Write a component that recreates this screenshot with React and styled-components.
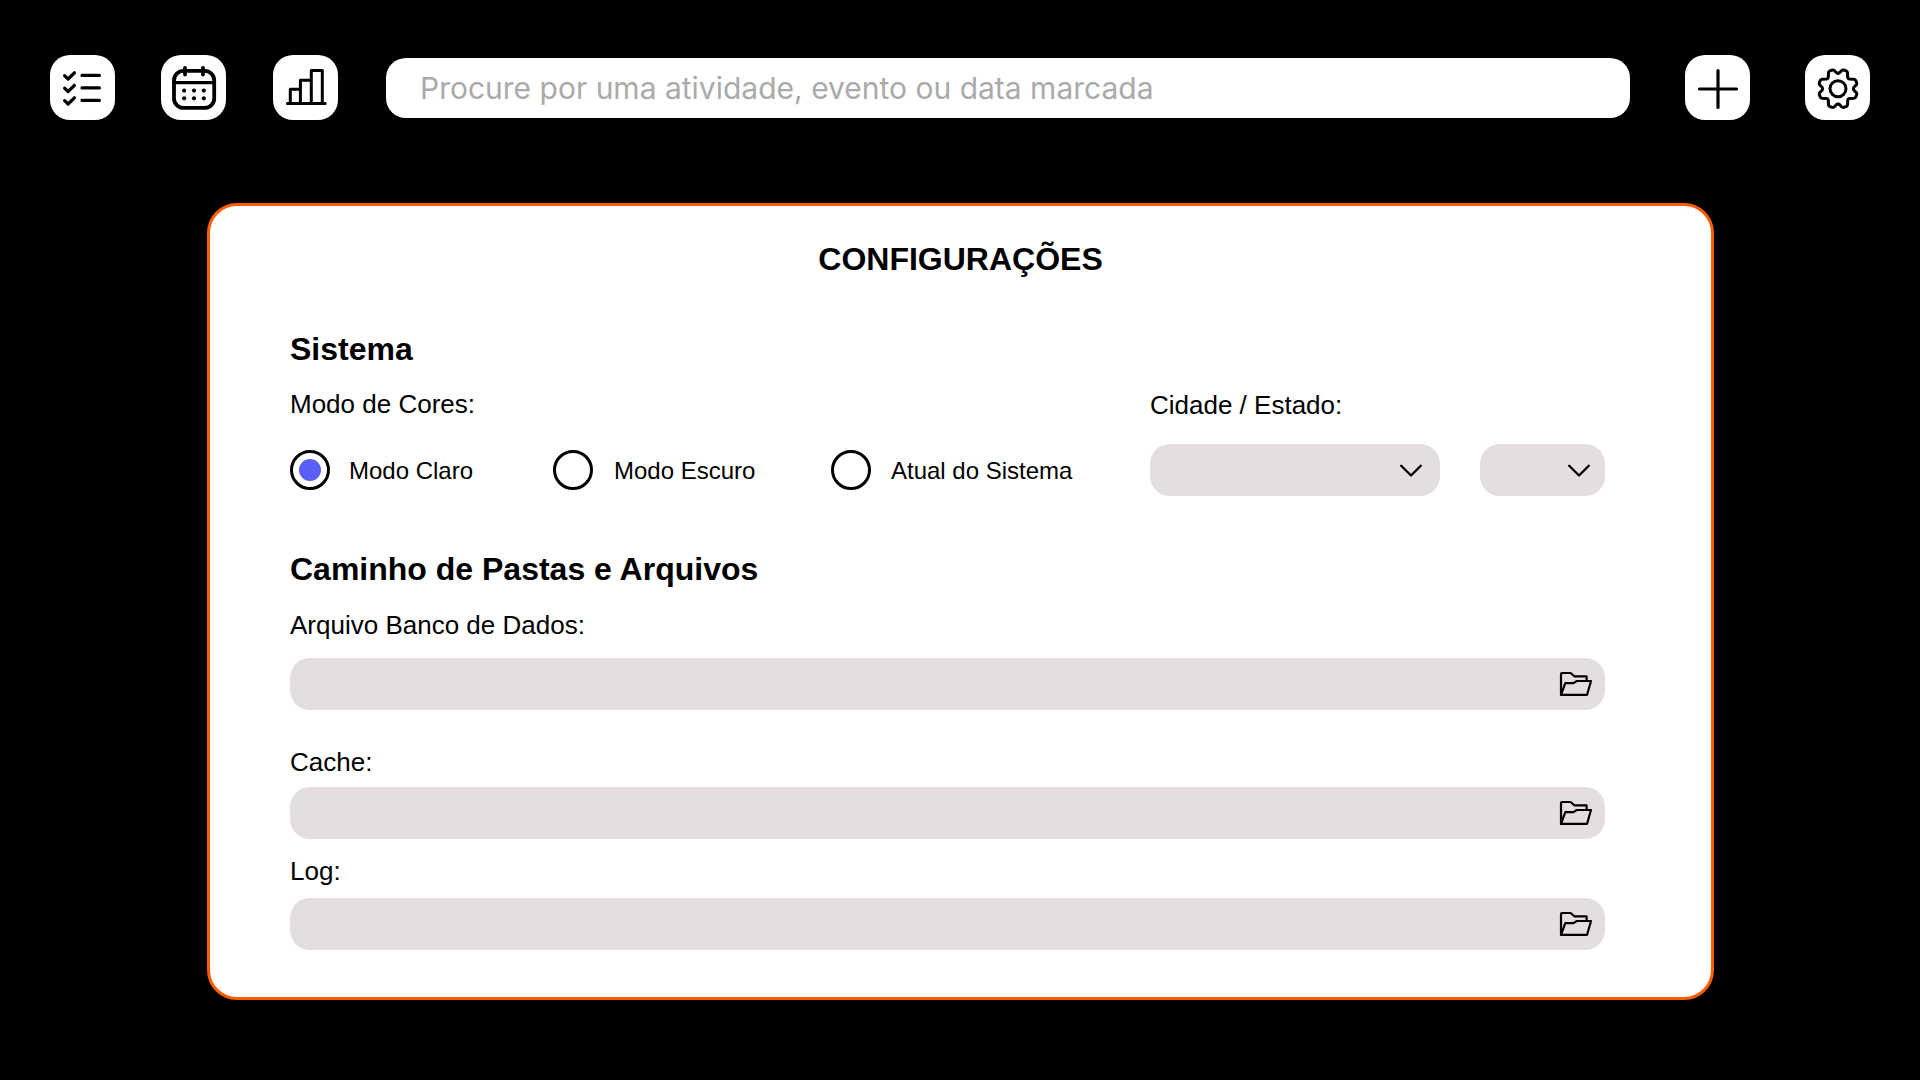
import React, { useState } from "react";
import styled, { createGlobalStyle } from "styled-components";

const GlobalStyle = createGlobalStyle`
  * { box-sizing: border-box; }
  body {
    margin: 0;
    background: #000;
    color: #000;
    font-family: "Liberation Sans", Arial, sans-serif;
  }
`;

const Page = styled.div`
  width: 1920px;
  height: 1080px;
  display: flex;
  flex-direction: column;
  background: #000;
  overflow: hidden;
`;

const Toolbar = styled.header`
  display: flex;
  align-items: center;
  padding: 55px 50px 0;
`;

const NavGroup = styled.nav`
  display: flex;
  gap: 46px;
`;

const ActionGroup = styled.div`
  display: flex;
  gap: 55px;
`;

const IconButton = styled.button`
  width: 65px;
  height: 65px;
  padding: 0;
  border: 0;
  border-radius: 20px;
  background: #fff;
  color: #000;
  display: block;
  margin-left: ${(p) => p.$shift || 0}px;

  svg { display: block; }
`;

const SearchInput = styled.input`
  flex: 1;
  height: 60px;
  margin: 1px 55px 0 48px;
  padding: 0 34px;
  border: 0;
  border-radius: 20px;
  background: #fff;
  outline: 0;
  font: 400 30px Inter, sans-serif;

  &::placeholder {
    color: #aaa;
    opacity: 1;
  }
`;

const Card = styled.main`
  width: 1507px;
  height: 797px;
  margin: 83px 0 0 207px;
  padding: 35px 106px 0 80px;
  border: 3px solid #ff5c00;
  border-radius: 30px;
  background: #fff;
`;

const Title = styled.h1`
  margin: 0 -26px 54px 0;
  text-align: center;
  font-size: 32px;
  line-height: 36px;
`;

const SectionTitle = styled.h2`
  margin: 0;
  font-size: 32px;
  line-height: 36px;
`;

const SystemRow = styled.section`
  display: flex;
  justify-content: space-between;
  margin: 22px 0 55px;
`;

const Label = styled.div`
  font-size: 26px;
  line-height: 30px;
`;

const RadioGroup = styled.div`
  display: grid;
  grid-template-columns: 263px 278px auto;
  margin-top: 31px;
`;

const RadioOption = styled.label`
  display: flex;
  align-items: center;
  gap: ${(p) => p.$gap}px;
  height: 40px;
  font-size: 24px;
  line-height: 27px;
  white-space: nowrap;
`;

const RadioInput = styled.input`
  appearance: none;
  display: grid;
  place-items: center;
  flex: none;
  width: 40px;
  height: 40px;
  margin: 0;
  border: 3px solid #000;
  border-radius: 50%;

  &:checked::before {
    content: "";
    width: 22px;
    height: 22px;
    border-radius: 50%;
    background: #5b5ff7;
  }
`;

const Place = styled.div`
  width: 455px;
  padding-top: 1px;
`;

const SelectRow = styled.div`
  display: flex;
  gap: 40px;
  margin-top: 24px;
`;

const SelectBox = styled.button`
  display: flex;
  align-items: center;
  justify-content: flex-end;
  width: ${(p) => p.$width}px;
  height: 52px;
  padding: 0 ${(p) => p.$end}px 0 0;
  border: 0;
  border-radius: 20px;
  background: #e4dede;
`;

const PathField = styled.div`
  display: flex;
  flex-direction: column;
  gap: ${(p) => p.$gap}px;
  margin-top: ${(p) => p.$top}px;
`;

const PathBox = styled.div`
  display: flex;
  align-items: center;
  justify-content: flex-end;
  height: 52px;
  padding-right: 13px;
  border-radius: 20px;
  background: #e4dede;
`;

const Glyph = ({ children, width = 3.2 }) => (
  <svg width="65" height="65" viewBox="0 0 65 65" fill="none" stroke="currentColor"
    strokeWidth={width} strokeLinecap="round" strokeLinejoin="round">
    {children}
  </svg>
);

const ChecklistIcon = () => (
  <Glyph>
    {[20.4, 32.9, 45.4].map((y) => (
      <path key={y} d={`M14.6 ${y + 0.2}l3.5 3.4 6.3-6.2M32 ${y}h17.4`} />
    ))}
  </Glyph>
);

const CalendarIcon = () => (
  <Glyph width={3.8}>
    <rect x="13" y="15.9" width="40.2" height="37" rx="9.5" />
    <path d="M13 27.6h40.2" strokeWidth="3.4" />
    <path d="M24 13v6.6M42 13v6.6" />
    {[35.6, 43.3].map((y) =>
      [23.1, 33, 42.8].map((x) => (
        <circle key={`${x}-${y}`} cx={x} cy={y} r="2.1" fill="currentColor" stroke="none" />
      ))
    )}
  </Glyph>
);

const ChartIcon = () => (
  <Glyph width={3}>
    <path d="M14.4 48.6h37.8M17.3 48.6V34.3h10M27.4 48.6V25.2h10.8M38.3 48.6V15.4h11v33.2" />
  </Glyph>
);

const PlusIcon = () => (
  <Glyph>
    <path d="M14.5 34h37M33 15.5v37" />
  </Glyph>
);

const GearIcon = () => (
  <Glyph width={3}>
    <g transform="translate(33 33.7)">
      <circle r="8" />
      {[0, 90, 180, 270].map((a) => (
        <path key={a} transform={`rotate(${a})`}
          d="M0-15.4Q1.4-15.4 2.6-17L3.6-18.1Q4.5-19 5.7-18.7L8.2-17.8Q9.4-17.3 9.5-16L9.7-11.6Q9.9-9.9 11.6-9.7L16-9.5Q17.3-9.4 17.8-8.2L18.7-5.7Q19-4.5 18.1-3.6L17-2.6Q15.4-1.4 15.4 0" />
      ))}
    </g>
  </Glyph>
);

const ChevronIcon = () => (
  <svg width="22" height="14" viewBox="0 0 22 14" fill="none" stroke="#000" strokeWidth="2.3"
    strokeLinecap="round" strokeLinejoin="round">
    <path d="M1.2 2.7l9.8 9.8 9.8-9.8" />
  </svg>
);

const FolderIcon = () => (
  <svg width="32" height="24" viewBox="0 0 32 24" fill="none" stroke="#000" strokeWidth="2.2"
    strokeLinecap="round" strokeLinejoin="round" overflow="visible">
    <path d="M1 22.8V2Q1 1 2 1h8.5l4.1 3.4H26.6V8.5" />
    <path d="M1 22.8L5.3 11.2h8.2L16.8 9H31l-3.9 13.8z" />
  </svg>
);

const modes = [
  { id: "claro", text: "Modo Claro", gap: 19 },
  { id: "escuro", text: "Modo Escuro", gap: 21 },
  { id: "sistema", text: "Atual do Sistema", gap: 20 },
];

const paths = [
  { text: "Arquivo Banco de Dados:", top: 23, gap: 18 },
  { text: "Cache:", top: 37, gap: 10 },
  { text: "Log:", top: 17, gap: 12 },
];

export default function App() {
  const [mode, setMode] = useState("claro");

  return (
    <Page>
      <GlobalStyle />
      <Toolbar>
        <NavGroup>
          <IconButton aria-label="Atividades"><ChecklistIcon /></IconButton>
          <IconButton aria-label="Calendário"><CalendarIcon /></IconButton>
          <IconButton aria-label="Estatísticas" $shift={1}><ChartIcon /></IconButton>
        </NavGroup>
        <SearchInput placeholder="Procure por uma atividade, evento ou data marcada" />
        <ActionGroup>
          <IconButton aria-label="Adicionar"><PlusIcon /></IconButton>
          <IconButton aria-label="Configurações"><GearIcon /></IconButton>
        </ActionGroup>
      </Toolbar>
      <Card>
        <Title>CONFIGURAÇÕES</Title>
        <SectionTitle>Sistema</SectionTitle>
        <SystemRow>
          <div>
            <Label>Modo de Cores:</Label>
            <RadioGroup>
              {modes.map((m) => (
                <RadioOption key={m.id} $gap={m.gap}>
                  <RadioInput type="radio" name="modo" checked={mode === m.id}
                    onChange={() => setMode(m.id)} />
                  {m.text}
                </RadioOption>
              ))}
            </RadioGroup>
          </div>
          <Place>
            <Label>Cidade / Estado:</Label>
            <SelectRow>
              <SelectBox $width={290} $end={18} aria-label="Cidade"><ChevronIcon /></SelectBox>
              <SelectBox $width={125} $end={15} aria-label="Estado"><ChevronIcon /></SelectBox>
            </SelectRow>
          </Place>
        </SystemRow>
        <SectionTitle>Caminho de Pastas e Arquivos</SectionTitle>
        {paths.map((p) => (
          <PathField key={p.text} $top={p.top} $gap={p.gap}>
            <Label>{p.text}</Label>
            <PathBox><FolderIcon /></PathBox>
          </PathField>
        ))}
      </Card>
    </Page>
  );
}
